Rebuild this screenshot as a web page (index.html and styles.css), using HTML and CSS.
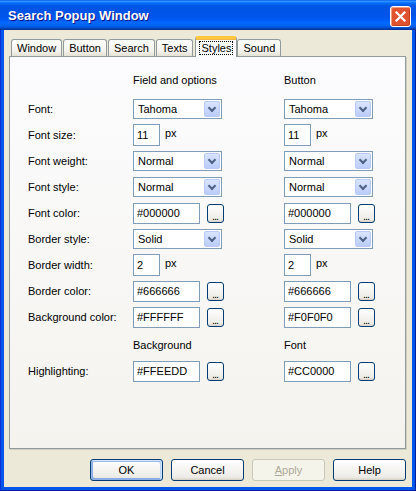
FILE: index.html
```html
<!DOCTYPE html>
<html lang="en">
<head>
    <meta charset="UTF-8">
    <title>Search Popup Window</title>
    <link rel="stylesheet" href="styles.css">
</head>
<body>
    <div class="window">
        <div class="titlebar">
            <span class="title">Search Popup Window</span>
            <span class="close">
                <svg width="11" height="11" viewBox="0 0 11 11"><path d="M1.5 1.5 L9.5 9.5 M9.5 1.5 L1.5 9.5" stroke="#fff" stroke-width="2.2" stroke-linecap="square"/></svg>
            </span>
        </div>

        <div class="client">
            <ul class="tabs">
                <li>Window</li>
                <li>Button</li>
                <li>Search</li>
                <li>Texts</li>
                <li class="active"><span>Styles</span></li>
                <li>Sound</li>
            </ul>

            <div class="panel">
                <div class="form">
                    <!-- cabecalho -->
                    <div></div>
                    <div class="head">Field and options</div>
                    <div class="head">Button</div>

                    <label>Font:</label>
                    <div class="cell"><div class="select"><span>Tahoma</span><i class="arrow"></i></div></div>
                    <div class="cell"><div class="select"><span>Tahoma</span><i class="arrow"></i></div></div>

                    <label>Font size:</label>
                    <div class="cell"><input class="size" value="11"><span class="unit">px</span></div>
                    <div class="cell"><input class="size" value="11"><span class="unit">px</span></div>

                    <label>Font weight:</label>
                    <div class="cell"><div class="select"><span>Normal</span><i class="arrow"></i></div></div>
                    <div class="cell"><div class="select"><span>Normal</span><i class="arrow"></i></div></div>

                    <label>Font style:</label>
                    <div class="cell"><div class="select"><span>Normal</span><i class="arrow"></i></div></div>
                    <div class="cell"><div class="select"><span>Normal</span><i class="arrow"></i></div></div>

                    <label>Font color:</label>
                    <div class="cell"><input class="color" value="#000000"><button class="pick">...</button></div>
                    <div class="cell"><input class="color" value="#000000"><button class="pick">...</button></div>

                    <label>Border style:</label>
                    <div class="cell"><div class="select"><span>Solid</span><i class="arrow"></i></div></div>
                    <div class="cell"><div class="select"><span>Solid</span><i class="arrow"></i></div></div>

                    <label>Border width:</label>
                    <div class="cell"><input class="size" value="2"><span class="unit">px</span></div>
                    <div class="cell"><input class="size" value="2"><span class="unit">px</span></div>

                    <label>Border color:</label>
                    <div class="cell"><input class="color" value="#666666"><button class="pick">...</button></div>
                    <div class="cell"><input class="color" value="#666666"><button class="pick">...</button></div>

                    <label>Background color:</label>
                    <div class="cell"><input class="color" value="#FFFFFF"><button class="pick">...</button></div>
                    <div class="cell"><input class="color" value="#F0F0F0"><button class="pick">...</button></div>

                    <!-- destaque -->
                    <div></div>
                    <div class="head head-low">Background</div>
                    <div class="head head-low">Font</div>

                    <label>Highlighting:</label>
                    <div class="cell"><input class="color" value="#FFEEDD"><button class="pick">...</button></div>
                    <div class="cell"><input class="color" value="#CC0000"><button class="pick">...</button></div>
                </div>
            </div>

            <div class="actions">
                <button class="btn default">OK</button>
                <button class="btn">Cancel</button>
                <button class="btn" disabled><u>A</u>pply</button>
                <button class="btn">Help</button>
            </div>
        </div>
    </div>
</body>
</html>
```

FILE: styles.css
```css
body{
    margin: 0;
    font-family: "Liberation Sans", Arial, sans-serif;
    font-size: 11px;
    color: #000;
}

.window{
    width: 416px;
    height: 491px;
    display: flex;
    flex-direction: column;
    background: #0055EA;
    box-shadow: inset 1px 0 #0831D9, inset -1px 0 #001EA0, inset 0 -1px #001EA0;
}

/* barra de titulo estilo XP */
.titlebar{
    height: 30px;
    flex-shrink: 0;
    display: flex;
    align-items: center;
    justify-content: space-between;
    padding: 0 5px 0 8px;
    background: linear-gradient(to bottom, #0058EE 0%, #3593FF 4%, #288EFF 6%, #127DFF 8%, #036FFC 10%, #0262EE 14%, #0057E5 20%, #0054E3 24%, #0055EB 56%, #005BF5 66%, #026AFE 76%, #0062EF 86%, #0052D6 92%, #0040AB 96%, #003092 100%);
}
.title{
    color: white;
    font-weight: bold;
    font-size: 13px;
    text-shadow: 1px 1px #0F1089;
    margin-top: 1px;
}
.close{
    width: 21px;
    height: 21px;
    box-sizing: border-box;
    border: 1px solid white;
    border-radius: 3px;
    background: #E0532E;
    box-shadow: inset 1px 1px #F29A7E, inset -1px -1px #C2401A;
    display: flex;
    align-items: center;
    justify-content: center;
    margin-top: 2px;
}
.close svg{
    display: block;
}

.client{
    flex: 1;
    margin: 0 4px 4px;
    background: #ECE9D8;
    display: flex;
    flex-direction: column;
}

/* abas */
.tabs{
    list-style: none;
    margin: 6px 0 0;
    padding: 0 0 0 7px;
    height: 21px;
    display: flex;
    align-items: flex-end;
    position: relative;
    z-index: 1;
}
.tabs li{
    height: 16px;
    line-height: 16px;
    margin: 0 1px 1px 0;
    padding: 0 5px;
    border: 1px solid #919B9C;
    border-bottom: none;
    border-radius: 3px 3px 0 0;
    background: linear-gradient(#FFFFFF, #F3F2EC 70%, #E4E1D4);
}
.tabs li.active{
    height: 18px;
    line-height: 18px;
    margin: 0 0 0 1px;
    padding: 0 4px;
    border-top: 3px solid #FFC83C;
    box-shadow: inset 0 1px #F5B54A;
    background: #FCFCFE;
}
.tabs li.active span{
    outline: 1px dotted #000;
    padding: 0 1px;
}

.panel{
    margin: -1px 6px 0 5px;
    height: 393px;
    box-sizing: border-box;
    border: 1px solid #919B9C;
    box-shadow: 1px 1px #D0CEBF;
    background: linear-gradient(#FCFCFE, #F4F3EE);
    padding: 10px 0 0 18px;
}

.form{
    display: grid;
    grid-template-columns: 105px 151px 1fr;
    grid-template-rows: 29px repeat(9, 26px) 28px 26px;
    align-items: center;
}
.head{
    align-self: start;
    line-height: 26px;
}
.head-low{
    margin-top: 2px;
}
.cell{
    display: flex;
    align-items: center;
}

input{
    font-family: inherit;
    font-size: 11px;
    color: #000;
    box-sizing: border-box;
    border: 1px solid #7F9DB9;
    background: white;
    padding: 0 3px;
    margin: 0;
    outline: none;
}
input.size{
    width: 27px;
    height: 22px;
}
input.color{
    width: 67px;
    height: 21px;
}
.unit{
    margin-left: 5px;
    margin-top: -4px;
}

.select{
    width: 89px;
    height: 20px;
    box-sizing: border-box;
    border: 1px solid #7F9DB9;
    background: white;
    padding: 1px;
    display: flex;
    align-items: center;
}
.select span{
    flex: 1;
    padding-left: 3px;
}
.arrow{
    width: 16px;
    height: 16px;
    box-sizing: border-box;
    border: 1px solid #B9CBF5;
    border-radius: 2px;
    background: linear-gradient(#D9E4FD, #BACCF8);
    position: relative;
}
.arrow::after{
    content: "";
    position: absolute;
    left: 4px;
    top: 3px;
    width: 4px;
    height: 4px;
    border-right: 2px solid #4D6185;
    border-bottom: 2px solid #4D6185;
    transform: rotate(45deg);
}

/* botoes XP */
button{
    font-family: inherit;
    font-size: 11px;
    color: #000;
    border: 1px solid #003C74;
    border-radius: 3px;
    background: linear-gradient(180deg, #FFFFFF, #ECEBE6 86%, #D6D0C5);
    padding: 0;
    margin: 0;
}
.pick{
    width: 17px;
    height: 19px;
    margin-left: 7px;
    line-height: 22px;
    letter-spacing: -1px;
    text-indent: -1px;
}

.actions{
    display: flex;
    justify-content: flex-end;
    gap: 8px;
    padding: 10px 6px 0 0;
}
.btn{
    width: 73px;
    height: 22px;
}
.btn.default{
    box-shadow: inset -1px 1px #CEE7FF, inset 1px 2px #98B8EA, inset -2px 2px #BCD4F6, inset 1px -1px #89ADE4, inset 2px -2px #89ADE4;
}
.btn:disabled{
    border-color: #C9C7BA;
    background: #F5F4EA;
    color: #ACA899;
}
```
